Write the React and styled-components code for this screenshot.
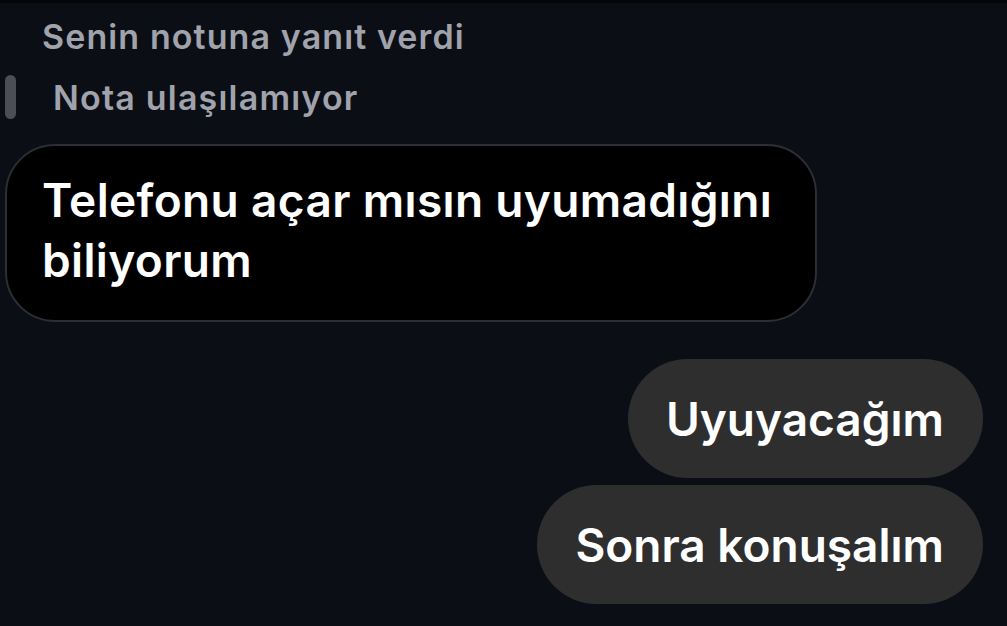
import React from 'react';
import styled, { createGlobalStyle } from 'styled-components';

const GlobalStyle = createGlobalStyle`
  html, body {
    margin: 0;
    padding: 0;
    background: #0b0f15;
  }
  body {
    font-family: Inter, "Noto Sans", "Liberation Sans", sans-serif;
    -webkit-font-smoothing: antialiased;
  }
`;

const Screen = styled.div`
  width: 1007px;
  height: 626px;
  overflow: hidden;
  background: #0b0f15;
  border-top: 3px solid #050608;
  box-sizing: border-box;
  display: flex;
  flex-direction: column;
`;

const ReplyLabel = styled.div`
  margin: 16px 0 0 42px;
  font-size: 34px;
  font-weight: 600;
  letter-spacing: 1.1px;
  color: #a0a3ac;
  line-height: 36px;
`;

const QuoteRow = styled.div`
  display: flex;
  align-items: center;
  gap: 37px;
  margin: 20px 0 0 5px;
  height: 44px;
`;

const QuoteBar = styled.div`
  width: 11px;
  height: 44px;
  border-radius: 6px;
  background: #4b4e54;
`;

const QuoteText = styled.div`
  font-size: 34px;
  font-weight: 600;
  letter-spacing: 1.2px;
  color: #a0a3ac;
`;

const Bubble = styled.div`
  margin: 25px 0 0 5px;
  width: 812px;
  height: 178px;
  box-sizing: border-box;
  background: #000;
  border: 2px solid #2b2e34;
  border-radius: 50px;
  padding: 24px 20px 0 35px;
  color: #fff;
  font-size: 46px;
  font-weight: 600;
  letter-spacing: 0.35px;
  line-height: 60px;
`;

const Replies = styled.div`
  margin-top: 37px;
  padding-right: 24px;
  display: flex;
  flex-direction: column;
  align-items: flex-end;
  gap: 7px;
`;

const Pill = styled.div`
  height: 119px;
  box-sizing: border-box;
  padding: 0 39px 0 38px;
  display: flex;
  align-items: center;
  border-radius: 60px;
  background: #2e2e2f;
  color: #fff;
  font-size: 46px;
  font-weight: 600;
`;

export default function App() {
  return (
    <>
      <GlobalStyle />
      <Screen>
        <ReplyLabel>Senin notuna yanıt verdi</ReplyLabel>
        <QuoteRow>
          <QuoteBar />
          <QuoteText>Nota ulaşılamıyor</QuoteText>
        </QuoteRow>
        <Bubble>Telefonu açar mısın uyumadığını biliyorum</Bubble>
        <Replies>
          <Pill>Uyuyacağım</Pill>
          <Pill>Sonra konuşalım</Pill>
        </Replies>
      </Screen>
    </>
  );
}
